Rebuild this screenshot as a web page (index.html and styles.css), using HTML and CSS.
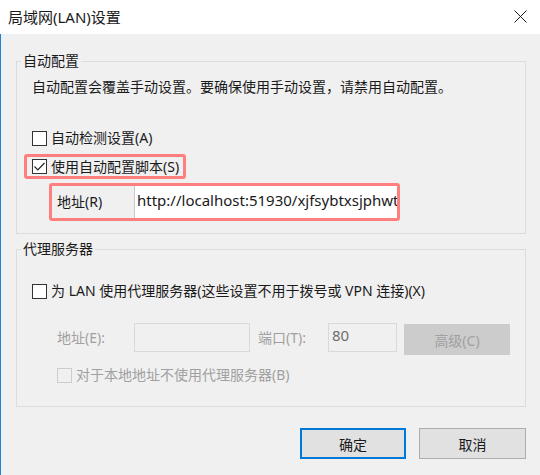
FILE: index.html
```html
<!DOCTYPE html>
<html lang="zh-CN">
<head>
<meta charset="utf-8">
<title>局域网(LAN)设置</title>
<link rel="stylesheet" href="styles.css">
</head>
<body>
<div class="window">
  <div class="titlebar">
    <span class="title">局域网(LAN)设置</span>
    <svg class="close" width="13" height="13" viewBox="0 0 13 13"><path d="M0.5 0.5L12.5 12.5M12.5 0.5L0.5 12.5" stroke="#1a1a1a" stroke-width="1" fill="none"/></svg>
  </div>
  <div class="client">
    <fieldset class="group group-auto">
      <legend>自动配置</legend>
      <p class="desc">自动配置会覆盖手动设置。要确保使用手动设置，请禁用自动配置。</p>
      <label class="check row-detect"><span class="box"></span><span>自动检测设置(A)</span></label>
      <div class="hl hl-script">
        <label class="check"><span class="box"><svg width="13" height="13" viewBox="0 0 13 13"><path d="M1.5 6.5L4.8 9.8L11.5 3" stroke="#222" stroke-width="1.2" fill="none"/></svg></span><span>使用自动配置脚本(S)</span></label>
      </div>
      <div class="hl hl-addr">
        <span class="addr-label">地址(R)</span>
        <span class="addr-input">http://localhost:51930/xjfsybtxsjphwt0</span>
      </div>
    </fieldset>
    <fieldset class="group group-proxy">
      <legend>代理服务器</legend>
      <label class="check row-proxy"><span class="box"></span><span>为 LAN 使用代理服务器(这些设置不用于拨号或 VPN 连接)(X)</span></label>
      <div class="proxy-row">
        <span class="dim lbl-addr">地址(E):</span>
        <span class="field field-addr"></span>
        <span class="dim lbl-port">端口(T):</span>
        <span class="field field-port">80</span>
        <span class="btn-adv">高级(C)</span>
      </div>
      <label class="check dim row-bypass"><span class="box box-disabled"></span><span>对于本地地址不使用代理服务器(B)</span></label>
    </fieldset>
    <div class="actions">
      <button class="btn btn-default">确定</button>
      <button class="btn">取消</button>
    </div>
  </div>
</div>
</body>
</html>
```

FILE: styles.css
```css
* { box-sizing: border-box; }
html, body { margin: 0; padding: 0; }
body {
  width: 540px;
  height: 475px;
  overflow: hidden;
  font-family: "Noto Sans", "Noto Sans CJK SC", sans-serif;
  font-size: 14px;
  color: #1a1a1a;
  background: #f0f0f0;
}
.window { width: 540px; height: 475px; display: flex; flex-direction: column; }
.titlebar {
  height: 34px;
  background: #ffffff;
  display: flex;
  align-items: center;
  justify-content: space-between;
  padding: 0 13px 1px 8px;
}
.title { font-size: 15px; line-height: 20px; color: #1a1a1a; }
.close { display: block; }
.client {
  flex: 1;
  background: #f0f0f0;
  border-left: 1px solid #1883d7;
  padding-top: 17px;
}
.group {
  margin: 0 14px 0 15px;
  padding: 0 0 12px 0;
  border: 1px solid #dcdcdc;
  min-width: 0;
}
.group legend {
  margin-left: 4px;
  padding: 0 2px;
  line-height: 20px;
  height: 20px;
}
.group-proxy { margin-top: 5px; padding-bottom: 21px; }
.desc { margin: 6px 0 0 15px; line-height: 20px; }
.check {
  display: flex;
  align-items: center;
  gap: 4px;
  height: 20px;
  line-height: 20px;
  white-space: nowrap;
}
.box {
  width: 15px;
  height: 15px;
  border: 1px solid #333333;
  background: #ffffff;
  display: flex;
  align-items: center;
  justify-content: center;
  flex: none;
}
.box svg { display: block; }
.row-detect { margin: 31px 0 0 15px; }
.hl {
  border: 3px solid #ff7f7f;
  border-radius: 3px;
}
.hl-script {
  margin: 6px 0 0 7px;
  width: 162px;
  height: 25px;
  padding-left: 5px;
  display: flex;
  align-items: center;
}
.hl-addr {
  margin: 4px 0 0 32px;
  width: 351px;
  height: 38px;
  display: flex;
}
.addr-label {
  width: 82px;
  flex: none;
  padding-left: 5px;
  line-height: 32px;
  background: #f0f0f0;
}
.addr-input {
  flex: 1;
  background: #ffffff;
  border-left: 1px solid #c8c8c8;
  padding-left: 2px;
  line-height: 28px;
  font-size: 15px;
  white-space: nowrap;
  overflow: hidden;
}
.row-proxy { margin: 22px 0 0 15px; }
.proxy-row {
  margin: 22px 0 0 40px;
  display: flex;
  align-items: flex-start;
  height: 32px;
}
.dim { color: #a0a0a0; }
.lbl-addr { width: 77px; line-height: 30px; }
.lbl-port { width: 70px; margin-left: 8px; line-height: 30px; }
.field {
  height: 29px;
  border: 1px solid #d9d9d9;
  background: #f0f0f0;
}
.field-addr { width: 116px; }
.field-port { width: 69px; padding: 1px 0 0 3px; line-height: 20px; font-size: 15px; color: #6d6d6d; }
.btn-adv {
  margin: 1px 0 0 7px;
  width: 106px;
  height: 31px;
  background: #cccccc;
  color: #a0a0a0;
  display: flex;
  align-items: center;
  justify-content: center;
}
.row-bypass { margin: 10px 0 0 40px; }
.box-disabled { border-color: #cccccc; background: #f0f0f0; }
.actions {
  display: flex;
  justify-content: flex-end;
  gap: 13px;
  margin: 21px 14px 0 0;
}
.btn {
  width: 107px;
  height: 31px;
  border: 1px solid #adadad;
  background: #e1e1e1;
  font-family: inherit;
  font-size: 14px;
  color: #1a1a1a;
  padding: 0;
}
.btn-default { width: 106px; border: 2px solid #0078d7; }
```
